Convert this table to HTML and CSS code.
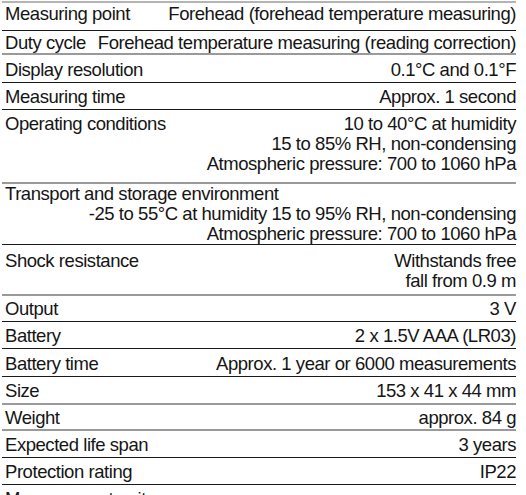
FILE: index.html
```
<!DOCTYPE html>
<html lang="en">
<head>
<meta charset="utf-8">
<title>Technical data</title>
<link rel="stylesheet" href="styles.css">
</head>
<body>
<div class="specs">
  <div class="row r1 line-dark"><span class="label">Measuring point</span><span class="value">Forehead (forehead temperature measuring)</span></div>
  <div class="row r2 line-gray"><span class="label">Duty cycle</span><span class="value">Forehead temperature measuring (reading correction)</span></div>
  <div class="row r3 line-dark"><span class="label">Display resolution</span><span class="value">0.1°C and 0.1°F</span></div>
  <div class="row r4 line-dark"><span class="label">Measuring time</span><span class="value">Approx. 1 second</span></div>
  <div class="row r5 line-gray"><span class="label">Operating conditions</span><span class="value">10 to 40°C at humidity<br>15 to 85% RH, non-condensing<br>Atmospheric pressure: 700 to 1060 hPa</span></div>
  <div class="row r6 line-dark"><span class="label">Transport and storage environment</span><span class="value">-25 to 55°C at humidity 15 to 95% RH, non-condensing<br>Atmospheric pressure: 700 to 1060 hPa</span></div>
  <div class="row r7 line-gray"><span class="label">Shock resistance</span><span class="value">Withstands free<br>fall from 0.9 m</span></div>
  <div class="row r8 line-dark"><span class="label">Output</span><span class="value">3 V</span></div>
  <div class="row r9 line-dark"><span class="label">Battery</span><span class="value">2 x 1.5V AAA (LR03)</span></div>
  <div class="row r10 line-dark"><span class="label">Battery time</span><span class="value">Approx. 1 year or 6000 measurements</span></div>
  <div class="row r11 line-gray"><span class="label">Size</span><span class="value">153 x 41 x 44 mm</span></div>
  <div class="row r12 line-gray"><span class="label">Weight</span><span class="value">approx. 84 g</span></div>
  <div class="row r13 line-dark"><span class="label">Expected life span</span><span class="value">3 years</span></div>
  <div class="row r14 line-dark"><span class="label">Protection rating</span><span class="value">IP22</span></div>
  <div class="row r15"><span class="label">Measurement units</span></div>
</div>
</body>
</html>
```
FILE: styles.css
```
html, body {
  margin: 0;
  padding: 0;
  background: #ffffff;
}
body {
  font-family: "Liberation Sans", Arial, sans-serif;
  font-size: 18.5px;
  letter-spacing: -0.45px;
  line-height: 20px;
  color: #151515;
  overflow: hidden;
}
.specs {
  width: 514px;
  margin-left: 2px;
  padding-top: 1px;
}
.row {
  display: flex;
  flex-wrap: wrap;
  justify-content: space-between;
  column-gap: 10px;
  padding-left: 3px;
  padding-right: 0;
}
.label {
  white-space: nowrap;
}
.value {
  margin-left: auto;
  text-align: right;
  white-space: nowrap;
}
.line-dark { border-bottom: 1px solid #1a1a1a; }
.line-gray { border-bottom: 2px solid #9a9a9a; }
.r1 { border-top: 2px solid #b4b4b4; padding-top: 1px; padding-bottom: 6px; }
.r2 { padding-top: 2px; padding-bottom: 0; }
.r3 { padding-top: 5px; padding-bottom: 2px; }
.r4 { padding-top: 4px; padding-bottom: 2px; }
.r5 { padding-top: 4px; padding-bottom: 8px; }
.r6 { padding-top: 0; padding-bottom: 0; }
.r7 { padding-top: 6px; padding-bottom: 3px; }
.r8 { padding-top: 3px; padding-bottom: 2px; }
.r9 { padding-top: 4px; padding-bottom: 2px; }
.r10 { padding-top: 5px; padding-bottom: 2px; }
.r11 { padding-top: 4px; padding-bottom: 2px; }
.r12 { padding-top: 3px; padding-bottom: 1px; }
.r13 { padding-top: 4px; padding-bottom: 2px; }
.r14 { padding-top: 4px; padding-bottom: 2px; }
.r15 { padding-top: 4px; }
```
